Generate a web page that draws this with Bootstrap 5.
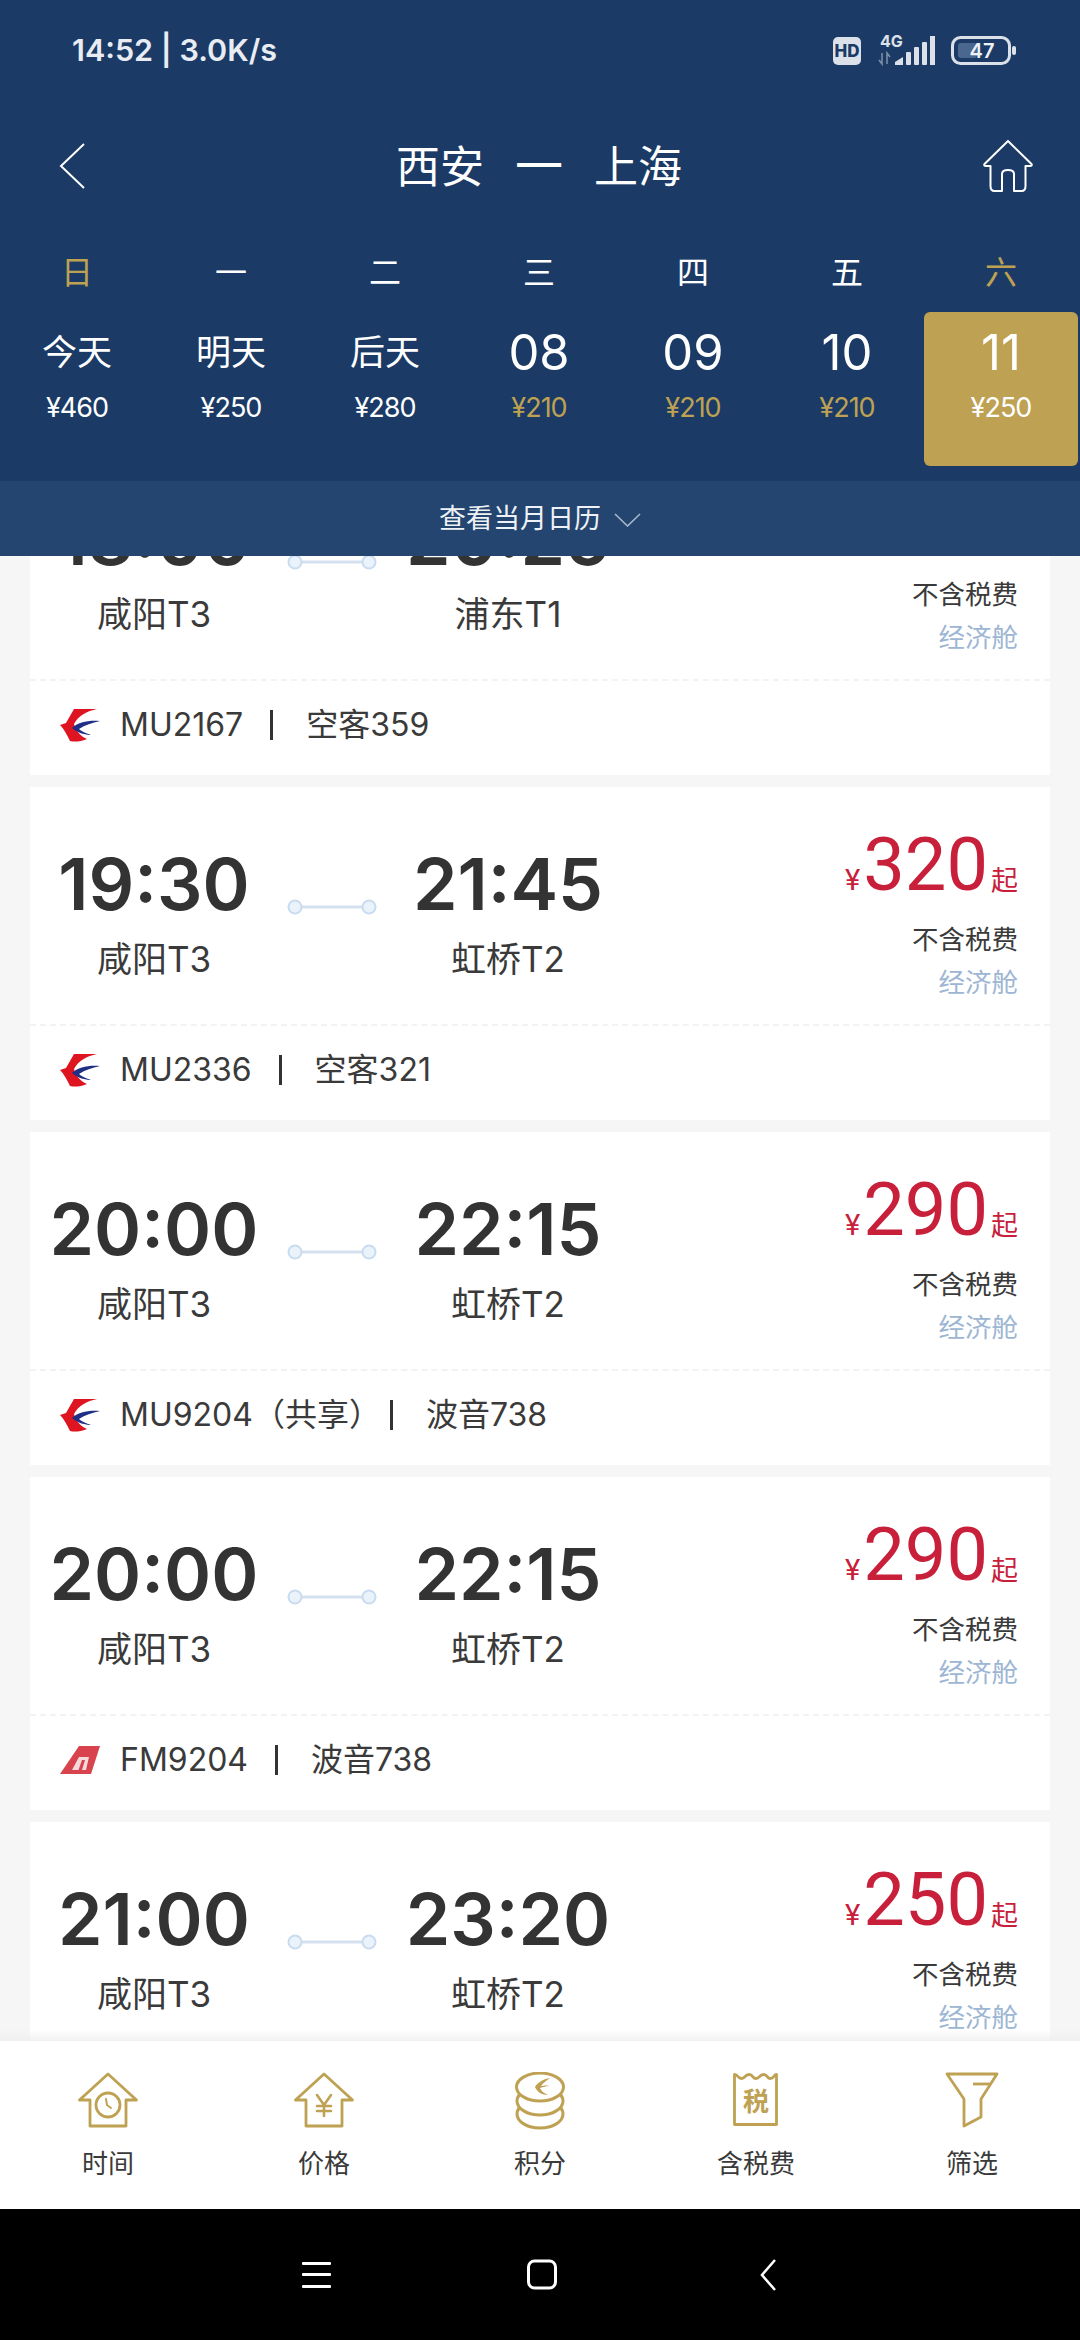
<!DOCTYPE html>
<html lang="zh-CN">
<head>
    <meta charset="UTF-8">
    <meta name="viewport" content="width=device-width, initial-scale=1.0">
    <title>西安 - 上海</title>
    <link href="https://cdn.jsdelivr.net/npm/bootstrap@5.3.0/dist/css/bootstrap.min.css" rel="stylesheet">
    <style>
        html, body { margin: 0; height: 2340px; overflow: hidden; }
        body { font-family: Inter, "Noto Sans CJK SC", sans-serif; color: #333; background: #f6f6f6; }
        .app { width: 1080px; height: 2340px; }
        .top-panel { background: #1b3b66; color: #fff; height: 481px; }
        .status-row { height: 100px; padding: 0 58px 0 72px; }
        .status-time { font-size: 30.5px; font-weight: 600; color: #e9edf3; line-height: 1; }
        .title-row { height: 132px; padding: 0 47px 0 59px; }
        .route { font-family: "Noto Sans CJK SC", sans-serif; font-size: 44px; line-height: 1; margin: 0 0 8px 10px; }
        .route .dash { margin: 0 31px; font-size: 48px; }
        .day-grid { display: grid; grid-template-columns: repeat(7, 154px); }
        .week-cell { font-family: "Noto Sans CJK SC", sans-serif; font-size: 32px; line-height: 40px; height: 80px; padding-top: 18px; text-align: center; }
        .day-cell { height: 154px; text-align: center; border-radius: 6px; padding-top: 11px; }
        .day-name { height: 56px; line-height: 60px; font-size: 49px; font-weight: 400; }
        .day-name.word { font-family: "Noto Sans CJK SC", sans-serif; font-size: 35px; line-height: 54px; }
        .day-price { font-size: 27px; line-height: 32px; margin-top: 13px; letter-spacing: -1px; }
        .gold-text { color: #bea153; }
        .day-active { background: #bea153; }
        .month-bar { background: #234570; color: #eef1f5; height: 75px; font-size: 27px; gap: 13px; padding-top: 2px; }
        .flight-list { padding: 0 30px; overflow: hidden; min-height: 0; }
        .flight-stack { margin-top: -114px; }
        .flight-card { background: #fff; height: 333px; margin-bottom: 12px; }
        .card-top { height: 239px; border-bottom: 2px dashed #f3f3f3; }
        .time-col { text-align: center; padding-top: 57px; }
        .time-col.dep { width: 248px; }
        .time-col.arr { width: 244px; }
        .clock { font-size: 71.5px; font-weight: 600; line-height: 80px; color: #333; white-space: nowrap; }
        .airport { font-size: 35px; line-height: 44px; margin-top: 13px; color: #3a3a3a; white-space: nowrap; }
        .link-col { width: 108px; padding-top: 110px; }
        .price-col { padding: 39px 32px 0 0; text-align: right; }
        .price-row { color: #c8203b; line-height: 78px; height: 78px; white-space: nowrap; }
        .price-yen { font-family: Roboto, sans-serif; font-size: 29px; margin-right: 3px; }
        .price-num { font-family: Roboto, sans-serif; font-size: 74px; font-weight: 400; }
        .price-from { font-family: "Noto Sans CJK SC", sans-serif; font-size: 27px; margin-left: 3px; }
        .tax-note { font-size: 26.5px; line-height: 36px; margin-top: 17px; color: #3a3a3a; }
        .cabin { font-size: 26.5px; line-height: 36px; margin-top: 7px; color: #9db6d3; }
        .card-foot { height: 92px; padding: 0 0 4px 30px; font-size: 32px; color: #3a3a3a; }
        .foot-logo { width: 40px; margin-right: 20px; }
        .foot-no.shared { margin-right: -18px; }
        .foot-sep { width: 3px; height: 30px; background: #333; margin: 0 33px 0 27px; }
        .tab-bar { background: #fff; height: 168px; position: relative; }
        .tab-bar::before { content: ""; position: absolute; left: 0; right: 0; top: -12px; height: 12px; background: linear-gradient(rgba(240,240,240,0), rgba(238,238,238,.8)); }
        .tab-item { width: 216px; text-align: center; padding-top: 31px; font-size: 26px; color: #3a3a3a; }
        .tab-icon { height: 58px; display: flex; justify-content: center; align-items: flex-start; }
        .tab-label { line-height: 36px; margin-top: 16px; }
        .nav-bar { background: #000; height: 131px; padding-left: 302px; }
    </style>
</head>
<body>
    <div class="app d-flex flex-column">
        <div class="top-panel flex-shrink-0">
            <div class="status-row d-flex align-items-center justify-content-between">
                <div class="status-time">14:52 | 3.0K/s</div>
                <svg width="190" height="36" viewBox="0 0 190 36">
                    <rect x="1" y="5" width="28" height="28" rx="5" fill="#dce1e9"/>
                    <text x="15" y="25" text-anchor="middle" font-family="Inter" font-size="17" font-weight="800" fill="#1b3b66">HD</text>
                    <text x="48" y="15" font-family="Inter" font-size="16" font-weight="700" fill="#dce1e9">4G</text>
                    <path d="M50 21v11l-3-4M55 32V21l3 4" fill="none" stroke="#7f91a9" stroke-width="1.500"/>
                    <g fill="#dce1e9">
                        <path d="M63 33v-3l8-5v8z"/><rect x="74" y="20" width="5" height="13" rx="1"/><rect x="82" y="15" width="5" height="18" rx="1"/><rect x="90" y="10" width="5" height="23" rx="1"/><rect x="98" y="4" width="5" height="29"/>
                    </g>
                    <rect x="120.500" y="5.500" width="57" height="26" rx="8" fill="none" stroke="#dce1e9" stroke-width="3"/>
                    <rect x="126" y="11" width="19" height="15" rx="3" fill="#4a6790"/>
                    <rect x="180" y="14" width="4" height="9" rx="2" fill="#dce1e9"/>
                    <text x="150" y="26" text-anchor="middle" font-family="Inter" font-size="20" font-weight="600" fill="#eef1f5">47</text>
                </svg>
            </div>
            <div class="title-row d-flex align-items-center justify-content-between">
                <svg width="26" height="46" viewBox="0 0 26 46"><path d="M25 1 2 23l23 22" fill="none" stroke="#fff" stroke-width="2"/></svg>
                <div class="route">西安<span class="dash">一</span>上海</div>
                <svg width="50" height="52" viewBox="0 0 50 52"><path d="M25 1 1.500 24Q.5 26 3 26H7.500V46Q7.500 51 11.500 51H19V34Q19 30 25 30T31 34V51H38.500Q42.500 51 42.500 46V26H47Q49.500 26 48.500 24Z" fill="none" stroke="#fff" stroke-width="2" stroke-linejoin="round"/></svg>
            </div>
            <div class="day-grid" id="week-row"></div>
            <div class="day-grid" id="day-row"></div>
        </div>
        <div class="month-bar flex-shrink-0 d-flex align-items-center justify-content-center">
            <span>查看当月日历</span>
            <svg width="27" height="14" viewBox="0 0 27 14"><path d="M1 1l12.500 12L26 1" fill="none" stroke="#a9b7ca" stroke-width="1.600"/></svg>
        </div>
        <div class="flight-list flex-grow-1">
            <div class="flight-stack" id="flights"></div>
        </div>
        <div class="tab-bar flex-shrink-0 d-flex">
            <div class="tab-item">
                <div class="tab-icon"><svg width="60" height="56" viewBox="0 0 60 56"><g fill="none" stroke="#bea153" stroke-width="2.800" stroke-linejoin="round" stroke-linecap="round"><path d="M30 2 1.500 28H12V54H48V28H58.500Z"/><circle cx="30" cy="33" r="12"/><path d="M28 27l1 6 4 3" stroke-width="2"/></g></svg></div>
                <div class="tab-label">时间</div>
            </div>
            <div class="tab-item">
                <div class="tab-icon"><svg width="60" height="56" viewBox="0 0 60 56"><g fill="none" stroke="#bea153" stroke-width="2.800" stroke-linejoin="round" stroke-linecap="round"><path d="M30 2 1.500 28H12V54H48V28H58.500Z"/><path d="M23 23l7 10 7-10M30 33v11M23 34h14M23 39h14" stroke-width="2.600"/></g></svg></div>
                <div class="tab-label">价格</div>
            </div>
            <div class="tab-item">
                <div class="tab-icon"><svg width="50" height="58" viewBox="0 0 50 58"><g fill="#fff" stroke="#bea153" stroke-width="3"><ellipse cx="25" cy="42" rx="23" ry="14"/><ellipse cx="25" cy="29" rx="23" ry="14"/><ellipse cx="25" cy="15" rx="23.500" ry="14"/></g><path d="M35 6C28 7 22 11 20 15c2 5 7 8 13 8-4-2-7-4-8-7 3-1 6-2 9-2-3-1-6 0-8 0 2-3 6-6 9-8z" fill="#bea153"/></svg></div>
                <div class="tab-label">积分</div>
            </div>
            <div class="tab-item">
                <div class="tab-icon"><svg width="46" height="54" viewBox="0 0 46 54"><path d="M1.500 2.500c4 0 3 4 7 4s3-4 7.500-4 3 4 7 4 3-4 7.500-4 3 4 7 4 3-4 6-4V52.500H1.500Z" fill="none" stroke="#bea153" stroke-width="2.800" stroke-linejoin="round"/><text x="23" y="39" text-anchor="middle" font-family="Noto Sans CJK SC" font-size="26" font-weight="700" fill="#bea153">税</text></svg></div>
                <div class="tab-label">含税费</div>
            </div>
            <div class="tab-item">
                <div class="tab-icon"><svg width="54" height="56" viewBox="0 0 54 56"><path d="M2 2H52L36 27V45L19 54V27Z" fill="none" stroke="#bea153" stroke-width="2.800" stroke-linejoin="round"/><path d="M28 12H46" stroke="#bea153" stroke-width="2.800"/></svg></div>
                <div class="tab-label">筛选</div>
            </div>
        </div>
        <div class="nav-bar flex-shrink-0 d-flex align-items-center">
            <svg width="474" height="34" viewBox="0 0 474 34">
                <g fill="#fff"><rect x="0" y="4" width="29" height="3" rx="1"/><rect x="0" y="15" width="29" height="3" rx="1"/><rect x="0" y="27" width="29" height="3" rx="1"/></g>
                <rect x="226.500" y="3" width="27" height="27" rx="6" fill="none" stroke="#fff" stroke-width="3"/>
                <path d="M473 2 460 17l13 15" fill="none" stroke="#fff" stroke-width="2.500"/>
            </svg>
        </div>
    </div>

    <script src="https://cdn.jsdelivr.net/npm/bootstrap@5.3.0/dist/js/bootstrap.bundle.min.js"></script>
    <script>
        const weekDays = ['日', '一', '二', '三', '四', '五', '六'];
        const days = [
            ['今天', '¥460'], ['明天', '¥250'], ['后天', '¥280'],
            ['08', '¥210', true], ['09', '¥210', true], ['10', '¥210', true], ['11', '¥250']
        ];
        const muLogo = `<svg width="40" height="34" viewBox="0 0 40 34"><path d="M14 1H37C27 3 18 8 14 16 16 24 22 29 27 31 20 34 14 34 10 33 7 27 4 21 0 17L6 15Z" fill="#de1421"/><path d="M40 13C29 12 18 14 12 20 18 25 25 27 31 27 25 25 21 23 19 21 25 17 32 15 40 13Z" fill="#1f2f86"/></svg>`;
        const fmLogo = `<svg width="40" height="28" viewBox="0 0 40 28"><path d="M19 0H40L31 28H0Z" fill="#d8444e"/><path d="M19 11H29L26 24H12ZM22 14 18.500 24H22L25 14Z" fill="#f6d9da" fill-rule="evenodd"/></svg>`;
        const flights = [
            { dep: '18:00', arr: '20:25', depPort: '咸阳T3', arrPort: '浦东T1', price: '360', logo: muLogo, no: 'MU2167', plane: '空客359' },
            { dep: '19:30', arr: '21:45', depPort: '咸阳T3', arrPort: '虹桥T2', price: '320', logo: muLogo, no: 'MU2336', plane: '空客321' },
            { dep: '20:00', arr: '22:15', depPort: '咸阳T3', arrPort: '虹桥T2', price: '290', logo: muLogo, no: 'MU9204（共享）', plane: '波音738' },
            { dep: '20:00', arr: '22:15', depPort: '咸阳T3', arrPort: '虹桥T2', price: '290', logo: fmLogo, no: 'FM9204', plane: '波音738' },
            { dep: '21:00', arr: '23:20', depPort: '咸阳T3', arrPort: '虹桥T2', price: '250', logo: muLogo, no: 'MU2168', plane: '空客320' }
        ];

        document.getElementById('week-row').innerHTML = weekDays.map((d, i) =>
            `<div class="week-cell ${i === 0 || i === 6 ? 'gold-text' : ''}">${d}</div>`).join('');

        document.getElementById('day-row').innerHTML = days.map((d, i) => `
            <div class="day-cell ${i === 6 ? 'day-active' : ''}">
                <div class="day-name ${isNaN(d[0]) ? 'word' : ''}">${d[0]}</div>
                <div class="day-price ${d[2] ? 'gold-text' : ''}">${d[1]}</div>
            </div>`).join('');

        document.getElementById('flights').innerHTML = flights.map(f => `
            <div class="flight-card">
                <div class="card-top d-flex">
                    <div class="time-col dep"><div class="clock">${f.dep}</div><div class="airport">${f.depPort}</div></div>
                    <div class="link-col d-flex justify-content-center">
                        <svg width="90" height="20" viewBox="0 0 90 20"><path d="M14 10H76" stroke="#d5e1f0" stroke-width="3"/><circle cx="8" cy="10" r="6.500" fill="#eaf2fb" stroke="#c9dbef" stroke-width="2"/><circle cx="82" cy="10" r="6.500" fill="#eaf2fb" stroke="#c9dbef" stroke-width="2"/></svg>
                    </div>
                    <div class="time-col arr"><div class="clock">${f.arr}</div><div class="airport">${f.arrPort}</div></div>
                    <div class="price-col flex-grow-1">
                        <div class="price-row"><span class="price-yen">¥</span><span class="price-num">${f.price}</span><span class="price-from">起</span></div>
                        <div class="tax-note">不含税费</div>
                        <div class="cabin">经济舱</div>
                    </div>
                </div>
                <div class="card-foot d-flex align-items-center">
                    <span class="foot-logo d-flex">${f.logo}</span>
                    <span class="foot-no ${f.no.includes('）') ? 'shared' : ''}">${f.no}</span><span class="foot-sep"></span><span>${f.plane}</span>
                </div>
            </div>`).join('');
    </script>
</body>
</html>
